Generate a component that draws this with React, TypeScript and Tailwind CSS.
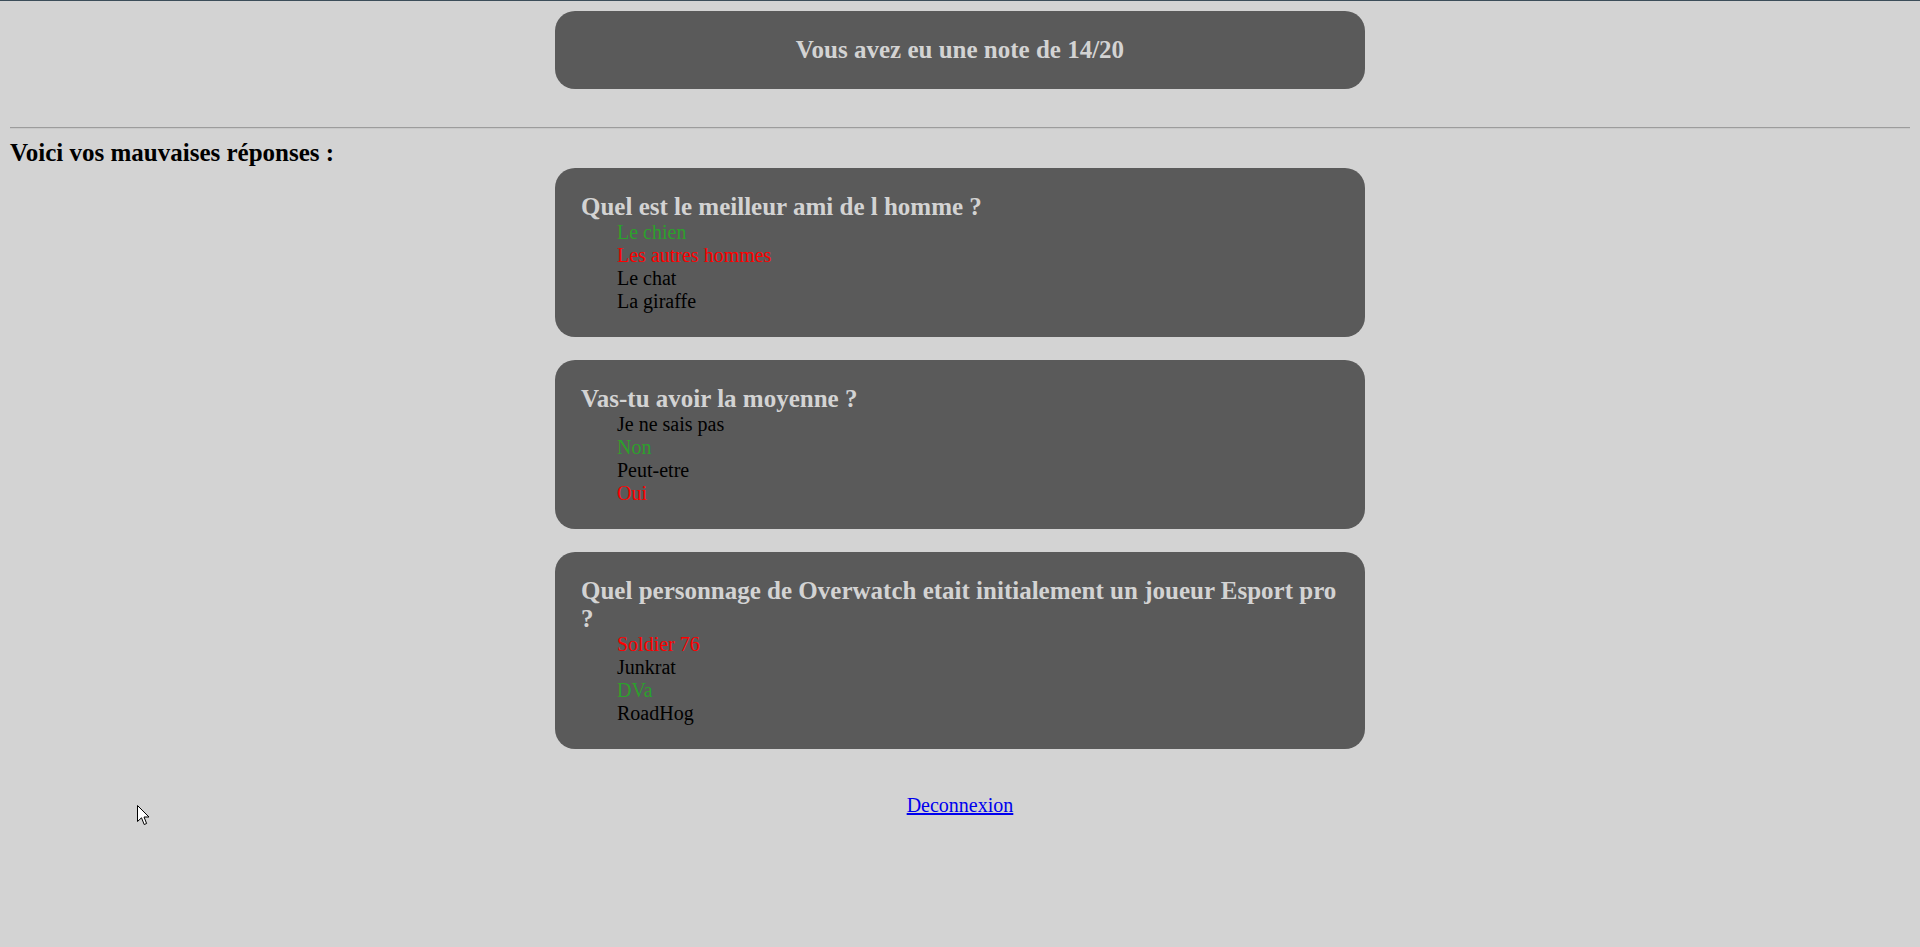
import React from "react";

type Ans = { t: string; c: "g" | "r" | "n" };

const questions: { q: string; a: Ans[] }[] = [
  {
    q: "Quel est le meilleur ami de l homme ?",
    a: [
      { t: "Le chien", c: "g" },
      { t: "Les autres hommes", c: "r" },
      { t: "Le chat", c: "n" },
      { t: "La giraffe", c: "n" },
    ],
  },
  {
    q: "Vas-tu avoir la moyenne ?",
    a: [
      { t: "Je ne sais pas", c: "n" },
      { t: "Non", c: "g" },
      { t: "Peut-etre", c: "n" },
      { t: "Oui", c: "r" },
    ],
  },
  {
    q: "Quel personnage de Overwatch etait initialement un joueur Esport pro ?",
    a: [
      { t: "Soldier 76", c: "r" },
      { t: "Junkrat", c: "n" },
      { t: "DVa", c: "g" },
      { t: "RoadHog", c: "n" },
    ],
  },
];

function color(c: Ans["c"]) {
  if (c === "g") return "text-[#2ca02c]";
  if (c === "r") return "text-[#ff0000]";
  return "text-black";
}

export default function App() {
  return (
    <div
      className="relative min-h-[947px] bg-[#d3d3d3] text-black"
      style={{ fontFamily: '"Liberation Serif", "Times New Roman", serif' }}
    >
      <div className="h-px bg-[#3b4d59]" />
      <div className="px-[10px] pt-[10px]">
        <div className="mx-auto flex h-[78px] w-[810px] justify-center rounded-[20px] bg-[#5a5a5a] pt-[25px]">
          <h3 className="text-[25px] font-bold leading-[28.75px] text-[#d3d3d3]">
            Vous avez eu une note de 14/20
          </h3>
        </div>
        <div className="mt-[38px] h-[2px] border-t border-[#9c9c9c] bg-[#c8c8c8]" />
        <h3 className="mt-[10px] text-[25px] font-bold leading-[28.75px]">
          Voici vos mauvaises réponses :
        </h3>
        <div className="flex flex-col items-center gap-[23px]">
          {questions.map((q, i) => (
            <div
              key={i}
              className="w-[810px] rounded-[20px] bg-[#5a5a5a] pb-[24px] pl-[26px] pr-[25px] pt-[25px]"
            >
              <h3 className="text-[25px] font-bold leading-[28px] text-[#d3d3d3]">
                {q.q}
              </h3>
              <ul className="ml-[36px] text-[20px] leading-[23px]">
                {q.a.map((a, j) => (
                  <li key={j} className={color(a.c)}>
                    {a.t}
                  </li>
                ))}
              </ul>
            </div>
          ))}
        </div>
        <p className="mt-[45px] text-center text-[20px] leading-[23px]">
          <a href="#" className="text-[#0000ee] underline">
            Deconnexion
          </a>
        </p>
      </div>
      <svg
        className="absolute left-[137px] top-[805px]"
        width="13"
        height="21"
        viewBox="0 0 13 21"
      >
        <path
          d="M0.5 0.5 L0.5 16.5 L4.5 12.8 L7.2 19.5 L9.6 18.5 L7 12 L12 12 Z"
          fill="#fff"
          stroke="#000"
          strokeWidth="1"
          strokeLinejoin="miter"
        />
      </svg>
    </div>
  );
}
